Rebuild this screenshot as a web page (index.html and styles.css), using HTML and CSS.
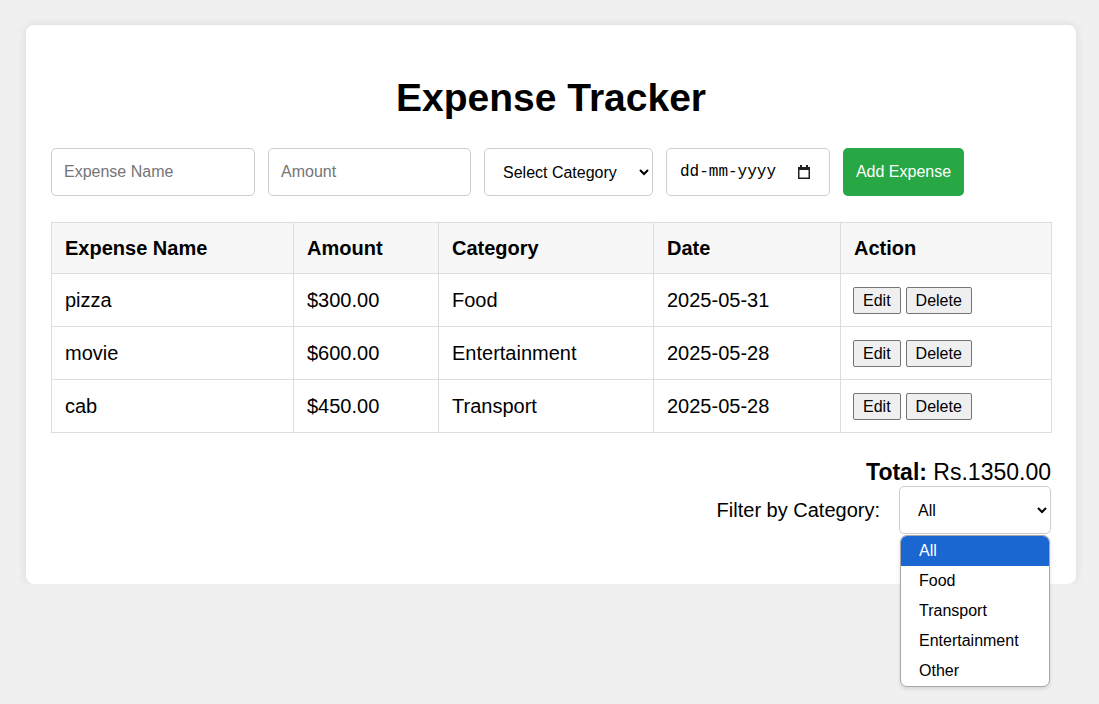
FILE: index.html
```html
<!DOCTYPE html>
<html lang="en">
<head>
<meta charset="utf-8">
<title>Expense Tracker</title>
<link rel="stylesheet" href="styles.css">
</head>
<body>
<div class="card">
  <h1 class="title">Expense Tracker</h1>
  <div class="form">
    <input class="field field-name" type="text" placeholder="Expense Name">
    <input class="field field-amount" type="text" placeholder="Amount">
    <select class="field field-cat">
      <option>Select Category</option>
    </select>
    <div class="field field-date">
      <span class="date-text">dd-mm-yyyy</span>
      <svg class="cal" width="12" height="15" viewBox="0 0 12 15">
        <rect x="2" y="1" width="2" height="3" fill="#222"/>
        <rect x="8" y="1" width="2" height="3" fill="#222"/>
        <rect x="0" y="3" width="12" height="3" fill="#222"/>
        <rect x="0.75" y="3.75" width="10.5" height="10.5" fill="none" stroke="#222" stroke-width="1.5"/>
      </svg>
    </div>
    <button class="add-btn">Add Expense</button>
  </div>

  <table class="table">
    <thead>
      <tr>
        <th class="c1">Expense Name</th>
        <th class="c2">Amount</th>
        <th class="c3">Category</th>
        <th class="c4">Date</th>
        <th class="c5">Action</th>
      </tr>
    </thead>
    <tbody>
      <tr>
        <td>pizza</td><td>$300.00</td><td>Food</td><td>2025-05-31</td>
        <td><button class="act">Edit</button><button class="act">Delete</button></td>
      </tr>
      <tr>
        <td>movie</td><td>$600.00</td><td>Entertainment</td><td>2025-05-28</td>
        <td><button class="act">Edit</button><button class="act">Delete</button></td>
      </tr>
      <tr>
        <td>cab</td><td>$450.00</td><td>Transport</td><td>2025-05-28</td>
        <td><button class="act">Edit</button><button class="act">Delete</button></td>
      </tr>
    </tbody>
  </table>

  <div class="total"><strong>Total:</strong> Rs.1350.00</div>

  <div class="filter">
    <label class="filter-label">Filter by Category:</label>
    <select class="filter-select">
      <option>All</option>
    </select>
  </div>
</div>

<div class="menu">
  <div class="menu-item active">All</div>
  <div class="menu-item">Food</div>
  <div class="menu-item">Transport</div>
  <div class="menu-item">Entertainment</div>
  <div class="menu-item">Other</div>
</div>
</body>
</html>
```

FILE: styles.css
```css
* { box-sizing: border-box; }

html, body {
  margin: 0;
  padding: 0;
  background: #f0f0f0;
  font-family: "Liberation Sans", Arial, sans-serif;
  color: #000;
}

body {
  padding-top: 25px;
}

.card {
  width: 1050px;
  margin-left: 26px;
  background: #fff;
  border-radius: 8px;
  padding: 25px;
  box-shadow: 0 0 10px rgba(0, 0, 0, 0.1);
}

.title {
  font-size: 39px;
  font-weight: bold;
  text-align: center;
  margin: 25px 0 28px;
  line-height: 45px;
}

.form {
  display: flex;
  gap: 13px;
  align-items: flex-start;
}

.field {
  height: 48px;
  border: 1px solid #ccc;
  border-radius: 5px;
  padding: 0 12px;
  font-family: "Liberation Sans", Arial, sans-serif;
  font-size: 16px;
  color: #000;
  background: #fff;
  outline: none;
}

.field::placeholder { color: #757575; }

.field-name { width: 204px; }
.field-amount { width: 203px; }
.field-cat { width: 169px; padding-left: 14px; }

.field-date {
  width: 164px;
  display: flex;
  align-items: center;
  justify-content: space-between;
  padding: 0 19px 0 13px;
}

.date-text {
  font-family: "Liberation Mono", "DejaVu Sans Mono", monospace;
  font-size: 16px;
  color: #000;
}

.cal { display: block; margin-top: -1px; }

.add-btn {
  width: 121px;
  height: 48px;
  border: none;
  border-radius: 5px;
  background: #28a745;
  color: #fff;
  font-family: "Liberation Sans", Arial, sans-serif;
  font-size: 16px;
  padding: 0;
}

.table {
  width: 1000px;
  margin-top: 26px;
  border-collapse: collapse;
  table-layout: fixed;
  font-size: 20px;
}

.table th,
.table td {
  border: 1px solid #ddd;
  padding: 0 12px 0 13px;
  text-align: left;
  vertical-align: middle;
}

.table th {
  height: 51px;
  background: #f7f7f7;
  font-weight: bold;
}

.table td { height: 53px; }

.table td:last-child { padding-left: 12px; }

.c1 { width: 242px; }
.c2 { width: 145px; }
.c3 { width: 215px; }
.c4 { width: 187px; }
.c5 { width: 211px; }

.act {
  font-family: "Liberation Sans", Arial, sans-serif;
  font-size: 16px;
  padding: 4px 9px 3px;
  margin: 0 5px 0 0;
  background: #efefef;
  border: 1px solid #767676;
  border-radius: 2px;
  color: #000;
  vertical-align: middle;
}

.total {
  margin-top: 26px;
  text-align: right;
  font-size: 23px;
}

.filter {
  margin-bottom: 25px;
  display: flex;
  justify-content: flex-end;
  align-items: center;
  gap: 19px;
}

.filter-label { font-size: 20px; }

.filter-select {
  width: 152px;
  height: 48px;
  border: 1px solid #ccc;
  border-radius: 5px;
  padding: 0 12px 0 14px;
  font-family: "Liberation Sans", Arial, sans-serif;
  font-size: 16px;
  background: #fff;
  color: #000;
  display: block;
}

.menu {
  position: absolute;
  top: 535px;
  left: 900px;
  width: 150px;
  background: #fff;
  border: 1px solid #a8a8a8;
  border-radius: 7px;
  overflow: hidden;
  box-shadow: 0 2px 4px rgba(0, 0, 0, 0.12);
  z-index: 10;
}

.menu-item {
  height: 30px;
  line-height: 30px;
  padding-left: 18px;
  font-size: 16px;
  color: #000;
}

.menu-item.active {
  background: #1a67d2;
  color: #fff;
}
```
